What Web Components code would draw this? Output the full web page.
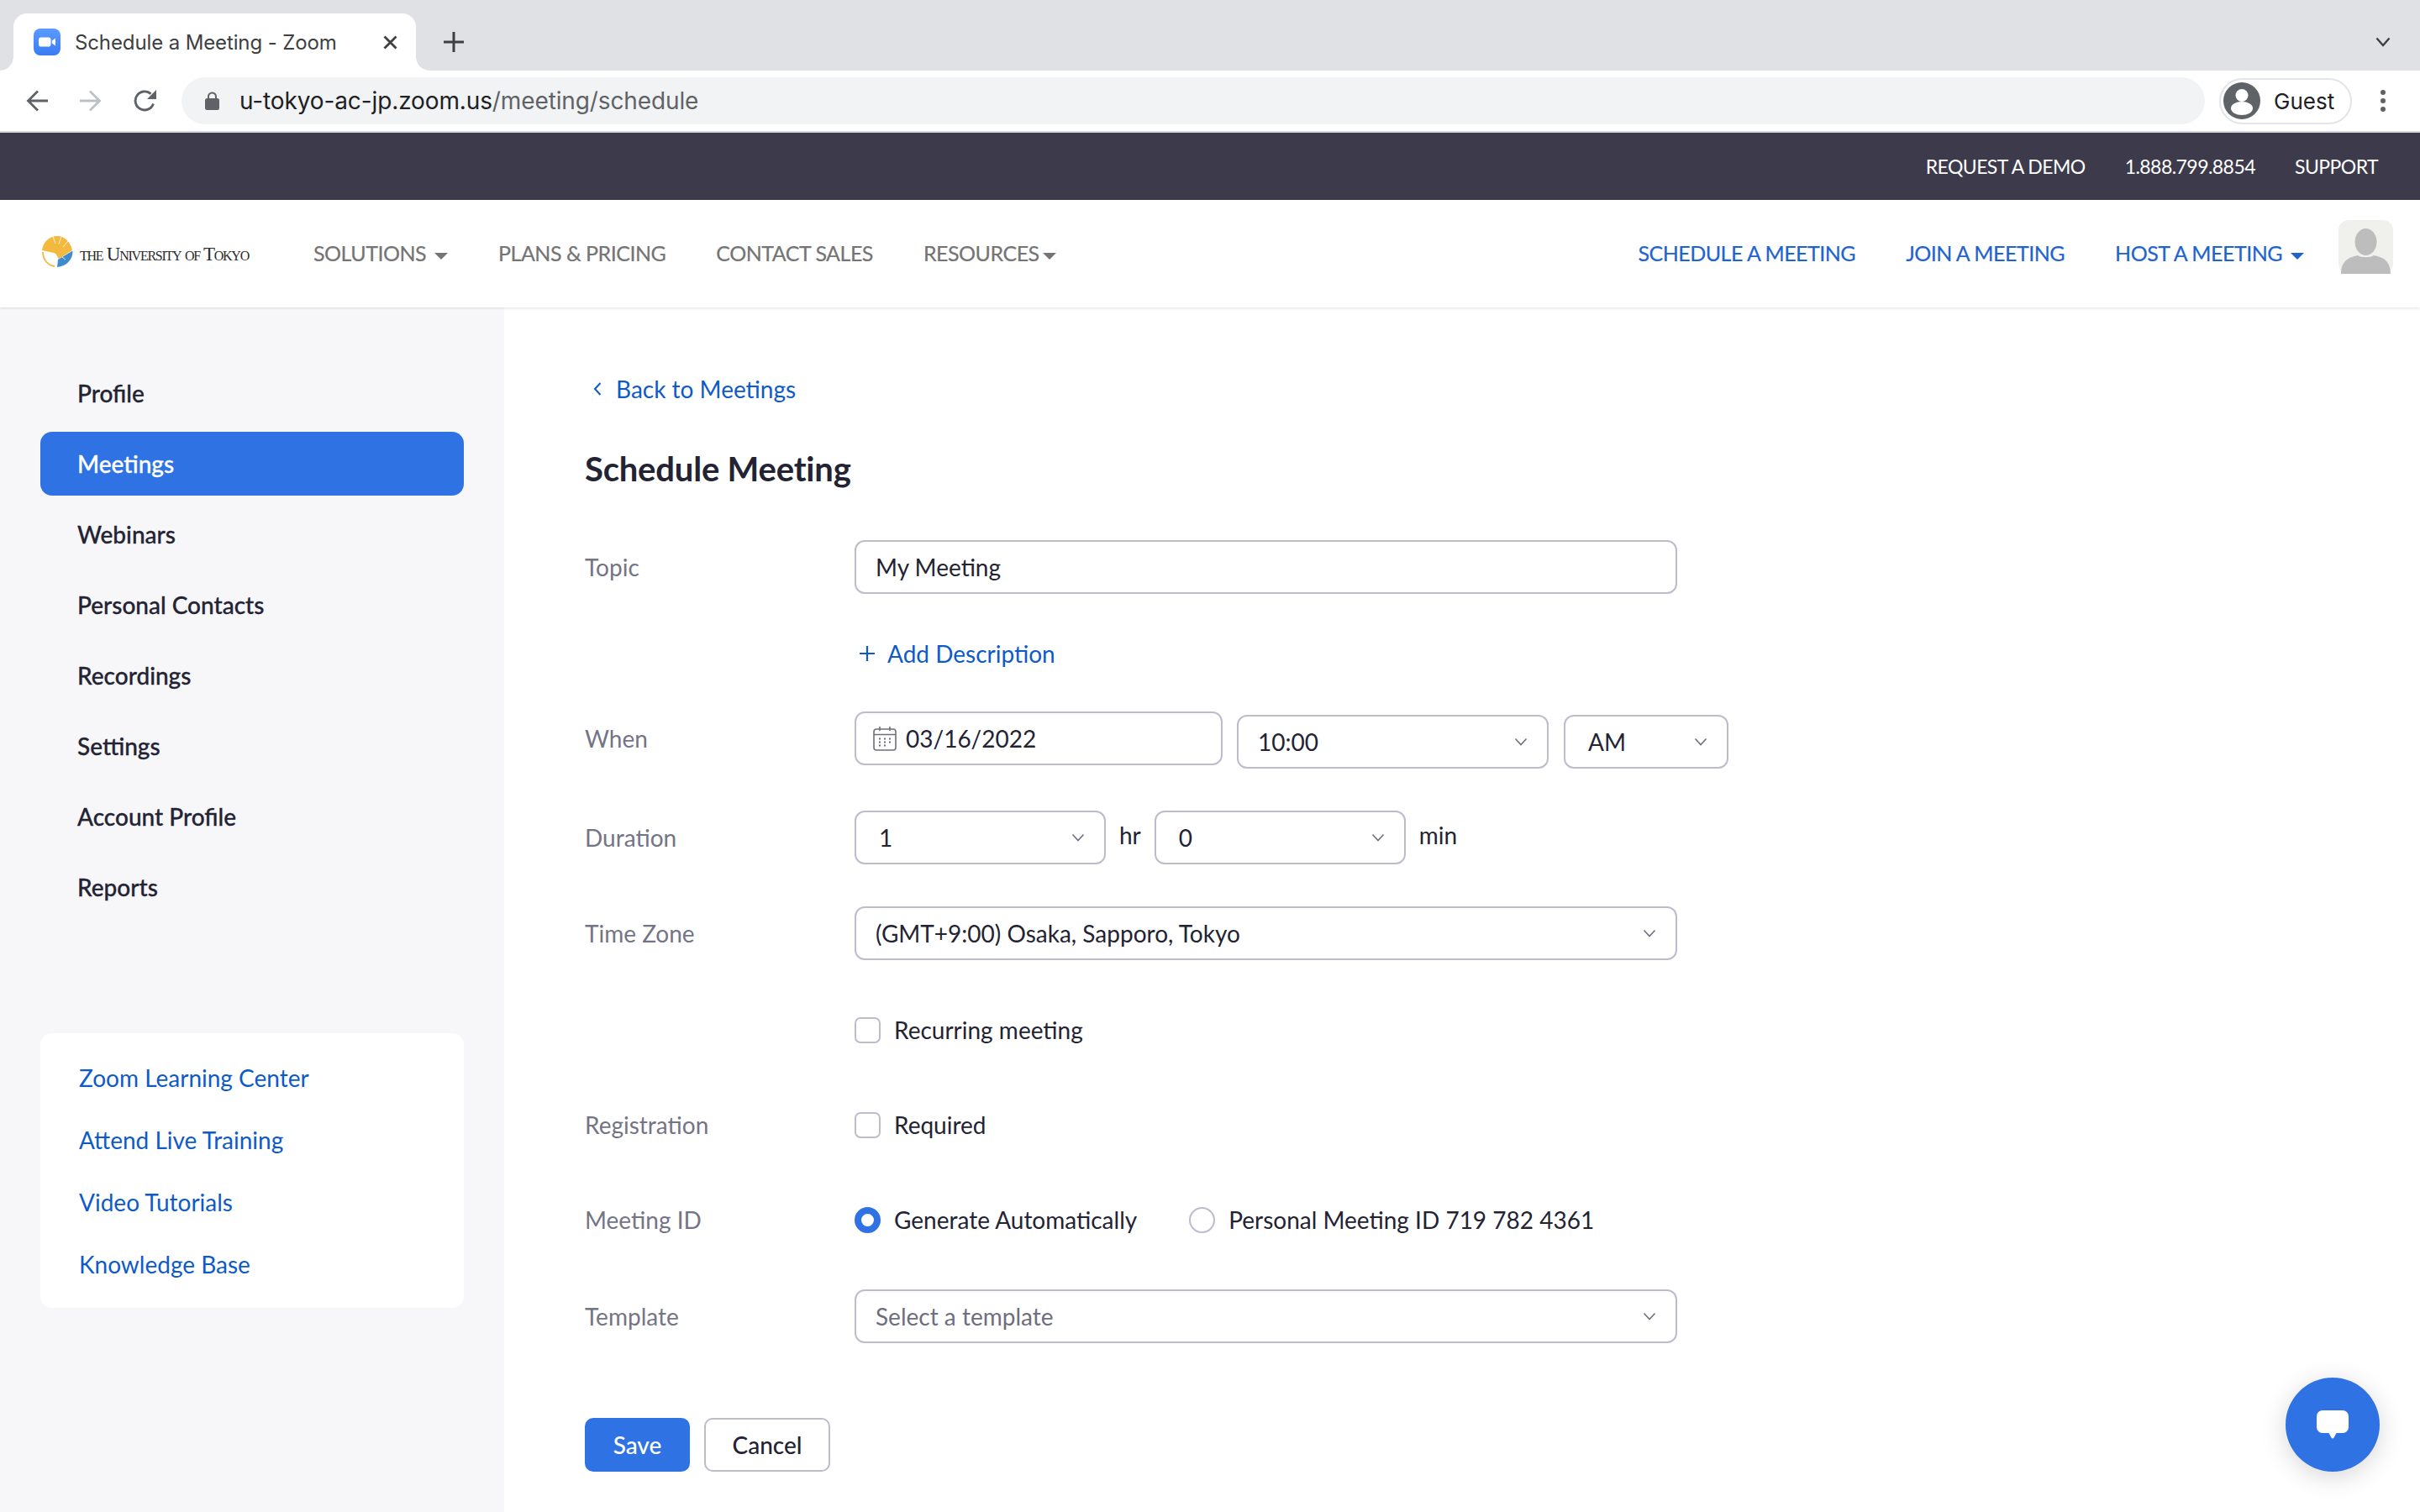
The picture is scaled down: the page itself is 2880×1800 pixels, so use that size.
<!DOCTYPE html>
<html lang="en">
<head>
<meta charset="utf-8">
<title>Schedule a Meeting - Zoom</title>
<style>
  html, body { margin: 0; height: 100%; overflow: hidden; background: #fff; }
  body { font-family: 'Lato', 'Liberation Sans', sans-serif; color: #232333; }
</style>
</head>
<body>
<browser-chrome></browser-chrome>
<site-topbar></site-topbar>
<site-header></site-header>
<page-shell>
  <side-nav slot="side"></side-nav>
  <meeting-form slot="main"></meeting-form>
</page-shell>
<chat-fab></chat-fab>

<script>
// Small helper: one template per element, attached to an open shadow root
function makeTemplate(html) {
  const template = document.createElement('template');
  template.innerHTML = html;
  return template;
}

const chevron = `<svg width="16" height="10" viewBox="0 0 16 10" fill="none" stroke="#6e6e7e" stroke-width="1.6"><path d="M1.5 1.5 8 8.5l6.5-7"/></svg>`;

// Browser tabs + toolbar
const chromeTemplate = makeTemplate(`
<style>
  :host { display: block; font-family: 'Inter', 'Roboto', sans-serif; }
  .strip { height: 84px; background: #e0e1e5; display: flex; align-items: flex-end; box-sizing: border-box; }
  .tab { width: 479px; height: 68px; margin-left: 16px; background: #fff; border-radius: 16px 16px 0 0; display: flex; align-items: center; box-sizing: border-box; padding-left: 24px; position: relative; }
  .tab::before, .tab::after { content: ''; position: absolute; bottom: 0; width: 16px; height: 16px; }
  .tab::before { left: -16px; background: radial-gradient(circle at 0 0, #e0e1e5 15.5px, #fff 16px); }
  .tab::after { right: -16px; background: radial-gradient(circle at 100% 0, #e0e1e5 15.5px, #fff 16px); }
  .title { margin-left: 17px; font-size: 24px; color: #3c4043; white-space: nowrap; width: 367px; letter-spacing: -.12px; }
  .plus { margin-left: 33px; align-self: center; padding-top: 16px; display: flex; }
  .strip-end { margin-left: auto; align-self: center; padding: 16px 35px 0 0; display: flex; }
  .bar { height: 72px; background: #fff; display: flex; align-items: center; box-sizing: border-box; }
  .nav { display: flex; align-items: center; width: 216px; flex: none; box-sizing: border-box; padding-left: 31px; gap: 38px; }
  .omni { width: 2408px; height: 56px; border-radius: 28px; background: #f1f3f4; display: flex; align-items: center; box-sizing: border-box; padding-left: 28px; }
  .url { margin-left: 24px; font-size: 28px; color: #202124; white-space: nowrap; letter-spacing: -.12px; }
  .url span { color: #5f6368; }
  .guest { margin-left: 17px; width: 158px; height: 55px; box-sizing: border-box; border: 2px solid #e3e5e8; border-radius: 28px; display: flex; align-items: center; padding-left: 3px; }
  .guest b { font-weight: 400; font-size: 26px; color: #202124; margin-left: 16px; }
  .dots { margin-left: 33px; display: flex; }
  .line { height: 2px; background: #d4d6da; }
</style>
<div class="strip">
  <div class="tab">
    <svg width="32" height="32" viewBox="0 0 32 32"><defs><linearGradient id="fav" x1="0" y1="0" x2="0" y2="1"><stop offset="0" stop-color="#5a9bff"/><stop offset="1" stop-color="#3a7bf4"/></linearGradient></defs><rect width="32" height="32" rx="8" fill="url(#fav)"/><rect x="6" y="10.5" width="14.5" height="11" rx="2.8" fill="#fff"/><path d="M21.8 14.6 26 11.4v9.2l-4.2-3.2z" fill="#fff"/></svg>
    <span class="title">Schedule a Meeting - Zoom</span>
    <svg width="17" height="17" viewBox="0 0 17 17" stroke="#3c4043" stroke-width="2.8"><path d="M1.500 1.500l14 14M15.500 1.500l-14 14"/></svg>
  </div>
  <div class="plus"><svg width="24" height="24" viewBox="0 0 24 24" stroke="#3c4043" stroke-width="3"><path d="M12 0v24M0 12h24"/></svg></div>
  <div class="strip-end"><svg width="18" height="12" viewBox="0 0 18 12" fill="none" stroke="#3c4043" stroke-width="2.4"><path d="M1.5 1.5 9 10l7.5-8.5"/></svg></div>
</div>
<div class="bar">
  <div class="nav">
    <svg width="26" height="26" viewBox="0 0 26 26" fill="none" stroke="#5f6368" stroke-width="2.8"><path d="M26 13H3M14 1.5 2.5 13 14 24.5"/></svg>
    <svg width="26" height="26" viewBox="0 0 26 26" fill="none" stroke="#bdc1c6" stroke-width="2.8"><path d="M0 13h23M12 1.5 23.500 13 12 24.500"/></svg>
    <svg width="28" height="28" viewBox="0 0 28 28" fill="none"><path d="M23.500 17.500A11 11 0 1 1 20.500 5.800" stroke="#5f6368" stroke-width="2.900"/><path d="M27 1v11H16z" fill="#5f6368"/></svg>
  </div>
  <div class="omni">
    <svg width="17" height="22" viewBox="0 0 17 22"><path d="M4 9V6a4.500 4.500 0 0 1 9 0v3" fill="none" stroke="#5f6368" stroke-width="2"/><rect y="8" width="17" height="14" rx="2.500" fill="#5f6368"/></svg>
    <div class="url">u-tokyo-ac-jp.zoom.us<span>/meeting/schedule</span></div>
  </div>
  <div class="guest">
    <svg width="44" height="44" viewBox="0 0 44 44"><circle cx="22" cy="22" r="22" fill="#5f6368"/><circle cx="22" cy="15.500" r="7.500" fill="#fff"/><ellipse cx="22" cy="31" rx="13" ry="8" fill="#fff"/></svg>
    <b>Guest</b>
  </div>
  <div class="dots"><svg width="8" height="28" viewBox="0 0 8 28" fill="#5f6368"><circle cx="4" cy="4" r="3"/><circle cx="4" cy="14" r="3"/><circle cx="4" cy="24" r="3"/></svg></div>
</div>
<div class="line"></div>
`);
class BrowserChrome extends HTMLElement {
  constructor() {
    super();
    this.attachShadow({ mode: 'open' });
    this.shadowRoot.appendChild(chromeTemplate.content.cloneNode(true));
  }
}
customElements.define('browser-chrome', BrowserChrome);

// Dark strip with demo / phone / support
const topbarTemplate = makeTemplate(`
<style>
  :host { display: flex; justify-content: flex-end; align-items: center; height: 80px; background: #3d3b4b; color: #fff; font-size: 23px; letter-spacing: -.55px; gap: 47px; padding-right: 50px; }
</style>
<span>REQUEST A DEMO</span><span>1.888.799.8854</span><span>SUPPORT</span>
`);
class SiteTopbar extends HTMLElement {
  constructor() {
    super();
    this.attachShadow({ mode: 'open' });
    this.shadowRoot.appendChild(topbarTemplate.content.cloneNode(true));
  }
}
customElements.define('site-topbar', SiteTopbar);

// Main site header
const headerTemplate = makeTemplate(`
<style>
  :host { display: flex; align-items: center; height: 128px; background: #fff; box-shadow: 0 1px 3px rgba(0,0,0,.12); position: relative; z-index: 1; padding: 0 32px 0 50px; font-size: 25px; color: #747474; letter-spacing: -.5px; -webkit-text-stroke: .2px; }
  .logo { display: flex; align-items: center; width: 323px; flex: none; margin-bottom: 5px; }
  .logo span { font-family: 'Liberation Serif', serif; font-variant: small-caps; font-size: 23px; color: #2b2b2b; margin: 6px 0 0 8px; letter-spacing: -1.25px; white-space: nowrap; -webkit-text-stroke: 0; }
  nav { display: flex; align-items: center; gap: 60px; margin-bottom: 2px; }
  nav.right { margin-left: auto; color: #1f63cf; }
  .caret { display: inline-block; width: 0; height: 0; border: 8px solid transparent; border-top: 8px solid currentColor; border-bottom: 0; margin-left: 10px; vertical-align: 2px; }
  .avatar { margin: 0 0 16px 41px; flex: none; display: flex; }
</style>
<div class="logo">
  <svg width="37" height="37" viewBox="0 0 37 37">
    <path d="M0 17C1 8 8 0 18 0s16 8 18 17L20 27l-5-5C10 18 4 18 0 17z" fill="#f3b93f"/>
    <path d="M13 0l3 9M23 .5l-3 9M31 6l-6 7" stroke="#fff" stroke-width=".8"/>
    <path d="M36.500 17.500C37 28 29 36 18 37l1-9z" fill="#3f8bd0"/>
    <path d="M28 28l-4-3" stroke="#fff" stroke-width=".8"/>
    <circle cx="12" cy="26" r="6.500" fill="#fff"/>
    <path d="M1 19c0 9 6 16 14 17" fill="none" stroke="#f3b93f" stroke-width="1.800"/>
  </svg>
  <span>the University of Tokyo</span>
</div>
<nav>
  <span>SOLUTIONS<i class="caret"></i></span>
  <span>PLANS &amp; PRICING</span>
  <span>CONTACT SALES</span>
  <span style="margin-top:-1px">RESOURCES<i class="caret" style="margin-left:4px"></i></span>
</nav>
<nav class="right">
  <span>SCHEDULE A MEETING</span>
  <span>JOIN A MEETING</span>
  <span>HOST A MEETING<i class="caret"></i></span>
</nav>
<div class="avatar">
  <svg width="65" height="64" viewBox="0 0 65 64"><rect width="65" height="64" rx="12" fill="#f0f0ec"/><ellipse cx="32.500" cy="26" rx="13" ry="16" fill="#bdbdbd"/><path d="M3 64c0-16 10-20 20-22 3 3 16 3 19 0 10 2 20 6 20 22z" fill="#bdbdbd"/></svg>
</div>
`);
class SiteHeader extends HTMLElement {
  constructor() {
    super();
    this.attachShadow({ mode: 'open' });
    this.shadowRoot.appendChild(headerTemplate.content.cloneNode(true));
  }
}
customElements.define('site-header', SiteHeader);

// Two-column page body
const shellTemplate = makeTemplate(`
<style>
  :host { display: grid; grid-template-columns: 600px 1fr; height: 1434px; }
  .side { background: #f7f7fa; }
  .main { background: #fff; }
</style>
<div class="side"><slot name="side"></slot></div>
<div class="main"><slot name="main"></slot></div>
`);
class PageShell extends HTMLElement {
  constructor() {
    super();
    this.attachShadow({ mode: 'open' });
    this.shadowRoot.appendChild(shellTemplate.content.cloneNode(true));
  }
}
customElements.define('page-shell', PageShell);

// Sidebar: menu + help links
const sideTemplate = makeTemplate(`
<style>
  :host { display: block; padding: 64px 48px 0; }
  ul { list-style: none; margin: 0; padding: 0; display: flex; flex-direction: column; gap: 8px; }
  li { height: 76px; display: flex; align-items: center; padding-left: 44px; border-radius: 14px; font-size: 28px; font-weight: 500; color: #232333; -webkit-text-stroke: .3px; }
  li.on { background: #2f72e3; color: #fff; }
  .help { margin-top: 136px; background: #fff; border-radius: 14px; height: 327px; box-sizing: border-box; padding: 16px 0 0 46px; font-size: 28px; color: #0e5ac8; }
  .help div { height: 74px; display: flex; align-items: center; }
</style>
<ul>
  <li>Profile</li><li class="on">Meetings</li><li>Webinars</li><li>Personal Contacts</li>
  <li>Recordings</li><li>Settings</li><li>Account Profile</li><li>Reports</li>
</ul>
<div class="help">
  <div>Zoom Learning Center</div><div>Attend Live Training</div><div>Video Tutorials</div><div>Knowledge Base</div>
</div>
`);
class SideNav extends HTMLElement {
  constructor() {
    super();
    this.attachShadow({ mode: 'open' });
    this.shadowRoot.appendChild(sideTemplate.content.cloneNode(true));
  }
}
customElements.define('side-nav', SideNav);

// Select-like box, width comes from the style on the element
const selectTemplate = makeTemplate(`
<style>
  :host { display: flex; flex: none; align-items: center; justify-content: space-between; box-sizing: border-box; height: 64px; border: 2px solid #bdbccd; border-radius: 12px; background: #fff; padding: 0 22px 0 23px; font-size: 28px; color: #232333; }
  svg { display: block; margin-right: 1px; }
</style>
<span><slot></slot></span>
${chevron}
`);
class SelectBox extends HTMLElement {
  constructor() {
    super();
    this.attachShadow({ mode: 'open' });
    this.shadowRoot.appendChild(selectTemplate.content.cloneNode(true));
  }
}
customElements.define('select-box', SelectBox);

const textTemplate = makeTemplate(`
<style>
  :host { display: flex; flex: none; align-items: center; box-sizing: border-box; height: 64px; border: 2px solid #bdbccd; border-radius: 12px; background: #fff; padding: 0 23px; font-size: 28px; color: #232333; gap: 11px; }
  ::slotted(svg) { margin-left: -3px; }
</style>
<slot></slot>
`);
class TextBox extends HTMLElement {
  constructor() {
    super();
    this.attachShadow({ mode: 'open' });
    this.shadowRoot.appendChild(textTemplate.content.cloneNode(true));
  }
}
customElements.define('text-box', TextBox);

// Checkbox or radio with a label
const choiceTemplate = makeTemplate(`
<style>
  :host { display: inline-flex; flex: none; align-items: center; gap: 16px; font-size: 28px; color: #232333; }
  i { display: block; box-sizing: border-box; width: 31px; height: 31px; border: 2px solid #bdbccd; border-radius: 7px; background: #fff; flex: none; }
  :host([type=radio]) i { border-radius: 50%; }
  :host([checked]) i { border: 8px solid #2f72e3; }
</style>
<i></i><span><slot></slot></span>
`);
class ChoiceBox extends HTMLElement {
  constructor() {
    super();
    this.attachShadow({ mode: 'open' });
    this.shadowRoot.appendChild(choiceTemplate.content.cloneNode(true));
  }
}
customElements.define('choice-box', ChoiceBox);

// Form row: label column + control column
const rowTemplate = makeTemplate(`
<style>
  :host { display: grid; grid-template-columns: 321px 1200px; align-items: center; }
  .label { font-size: 28px; color: #747487; }
  .ctl { display: flex; align-items: center; }
</style>
<div class="label"><slot name="label"></slot></div>
<div class="ctl"><slot></slot></div>
`);
class FormRow extends HTMLElement {
  constructor() {
    super();
    this.attachShadow({ mode: 'open' });
    this.shadowRoot.appendChild(rowTemplate.content.cloneNode(true));
  }
}
customElements.define('form-row', FormRow);

const btnTemplate = makeTemplate(`
<style>
  :host { display: flex; align-items: center; justify-content: center; box-sizing: border-box; height: 64px; border-radius: 10px; font-size: 28px; font-weight: 500; border: 2px solid #bdbccd; color: #232333; background: #fff; }
  :host([primary]) { background: #2f72e3; border-color: #2f72e3; color: #fff; }
</style>
<slot></slot>
`);
class ZoomButton extends HTMLElement {
  constructor() {
    super();
    this.attachShadow({ mode: 'open' });
    this.shadowRoot.appendChild(btnTemplate.content.cloneNode(true));
  }
}
customElements.define('zoom-button', ZoomButton);

// The schedule form itself
const formTemplate = makeTemplate(`
<style>
  :host { display: block; padding: 79px 0 0 96px; font-size: 28px; color: #232333; }
  .back { display: flex; align-items: center; height: 36px; color: #0e5ac8; gap: 17px; margin-left: 10px; }
  h1 { margin: 47px 0 0; font-size: 40px; line-height: 60px; font-weight: 700; letter-spacing: -.2px; }
  .add { display: flex; align-items: center; height: 40px; color: #0e5ac8; margin: 51px 0 0 321px; padding-left: 5px; gap: 14px; }
  form-row { margin-top: 50px; }
  .unit { margin: -7px 16px 0 16px; }
</style>
<div class="back"><svg width="10" height="18" viewBox="0 0 10 18" fill="none" stroke="#0e5ac8" stroke-width="2"><path d="M8.500 2 2 9l6.500 7"/></svg><span>Back to Meetings</span></div>
<h1>Schedule Meeting</h1>
<form-row style="margin-top:55px"><span slot="label">Topic</span><text-box style="width:979px">My Meeting</text-box></form-row>
<div class="add"><svg width="20" height="20" viewBox="0 0 20 20" stroke="#0e5ac8" stroke-width="2.200"><path d="M10 1v18M1 10h18"/></svg><span>Add Description</span></div>
<form-row style="margin-top:49px">
  <span slot="label" style="display:block;margin-bottom:4px">When</span>
  <text-box style="width:438px;margin-bottom:4px"><svg width="28" height="30" viewBox="0 0 28 30" fill="none" stroke="#6e6e7e" stroke-width="1.600"><rect x="1" y="4" width="26" height="25" rx="3"/><path d="M1 10.500h26M8 1v5M20 1v5"/><path d="M7 15.500h2M13 15.500h2M19 15.500h2M7 19.500h2M13 19.500h2M19 19.500h2M7 23.500h2M13 23.500h2" stroke-width="1.800"/></svg>03/16/2022</text-box>
  <select-box style="width:371px;margin:4px 0 0 17px;padding-left:23px">10:00</select-box>
  <select-box style="width:196px;margin:4px 0 0 18px;padding-left:27px">AM</select-box>
</form-row>
<form-row style="margin-top:50px">
  <span slot="label">Duration</span>
  <select-box style="width:299px;padding-left:27px">1</select-box><span class="unit">hr</span>
  <select-box style="width:299px;padding-left:27px">0</select-box><span class="unit">min</span>
</form-row>
<form-row><span slot="label">Time Zone</span><select-box style="width:979px">(GMT+9:00) Osaka, Sapporo, Tokyo</select-box></form-row>
<form-row style="margin-top:66px"><span slot="label"></span><choice-box>Recurring meeting</choice-box></form-row>
<form-row style="margin-top:79px"><span slot="label">Registration</span><choice-box>Required</choice-box></form-row>
<form-row style="margin-top:79px"><span slot="label">Meeting ID</span><choice-box type="radio" checked>Generate Automatically</choice-box><choice-box type="radio" style="margin-left:62px">Personal Meeting ID 719 782 4361</choice-box></form-row>
<form-row style="margin-top:66px"><span slot="label">Template</span><select-box style="width:979px;color:#6e6e7e">Select a template</select-box></form-row>
<div style="display:flex;gap:17px;margin-top:89px">
  <zoom-button primary style="width:125px">Save</zoom-button>
  <zoom-button style="width:150px">Cancel</zoom-button>
</div>
`);
class MeetingForm extends HTMLElement {
  constructor() {
    super();
    this.attachShadow({ mode: 'open' });
    this.shadowRoot.appendChild(formTemplate.content.cloneNode(true));
  }
}
customElements.define('meeting-form', MeetingForm);

// Floating chat button, sits over the page
const fabTemplate = makeTemplate(`
<style>
  :host { position: fixed; right: 48px; bottom: 48px; width: 112px; height: 112px; border-radius: 50%; background: #2f72e3; box-shadow: 0 6px 30px rgba(0,0,0,.16); display: flex; align-items: center; justify-content: center; }
</style>
<svg width="38" height="34" viewBox="0 0 38 34"><path d="M7 0h24a7 7 0 0 1 7 7v13a7 7 0 0 1-7 7h-7.500l-3 5.500q-1.500 2-3 0l-3-5.500H7a7 7 0 0 1-7-7V7a7 7 0 0 1 7-7z" fill="#fff"/></svg>
`);
class ChatFab extends HTMLElement {
  constructor() {
    super();
    this.attachShadow({ mode: 'open' });
    this.shadowRoot.appendChild(fabTemplate.content.cloneNode(true));
  }
}
customElements.define('chat-fab', ChatFab);
</script>
</body>
</html>
